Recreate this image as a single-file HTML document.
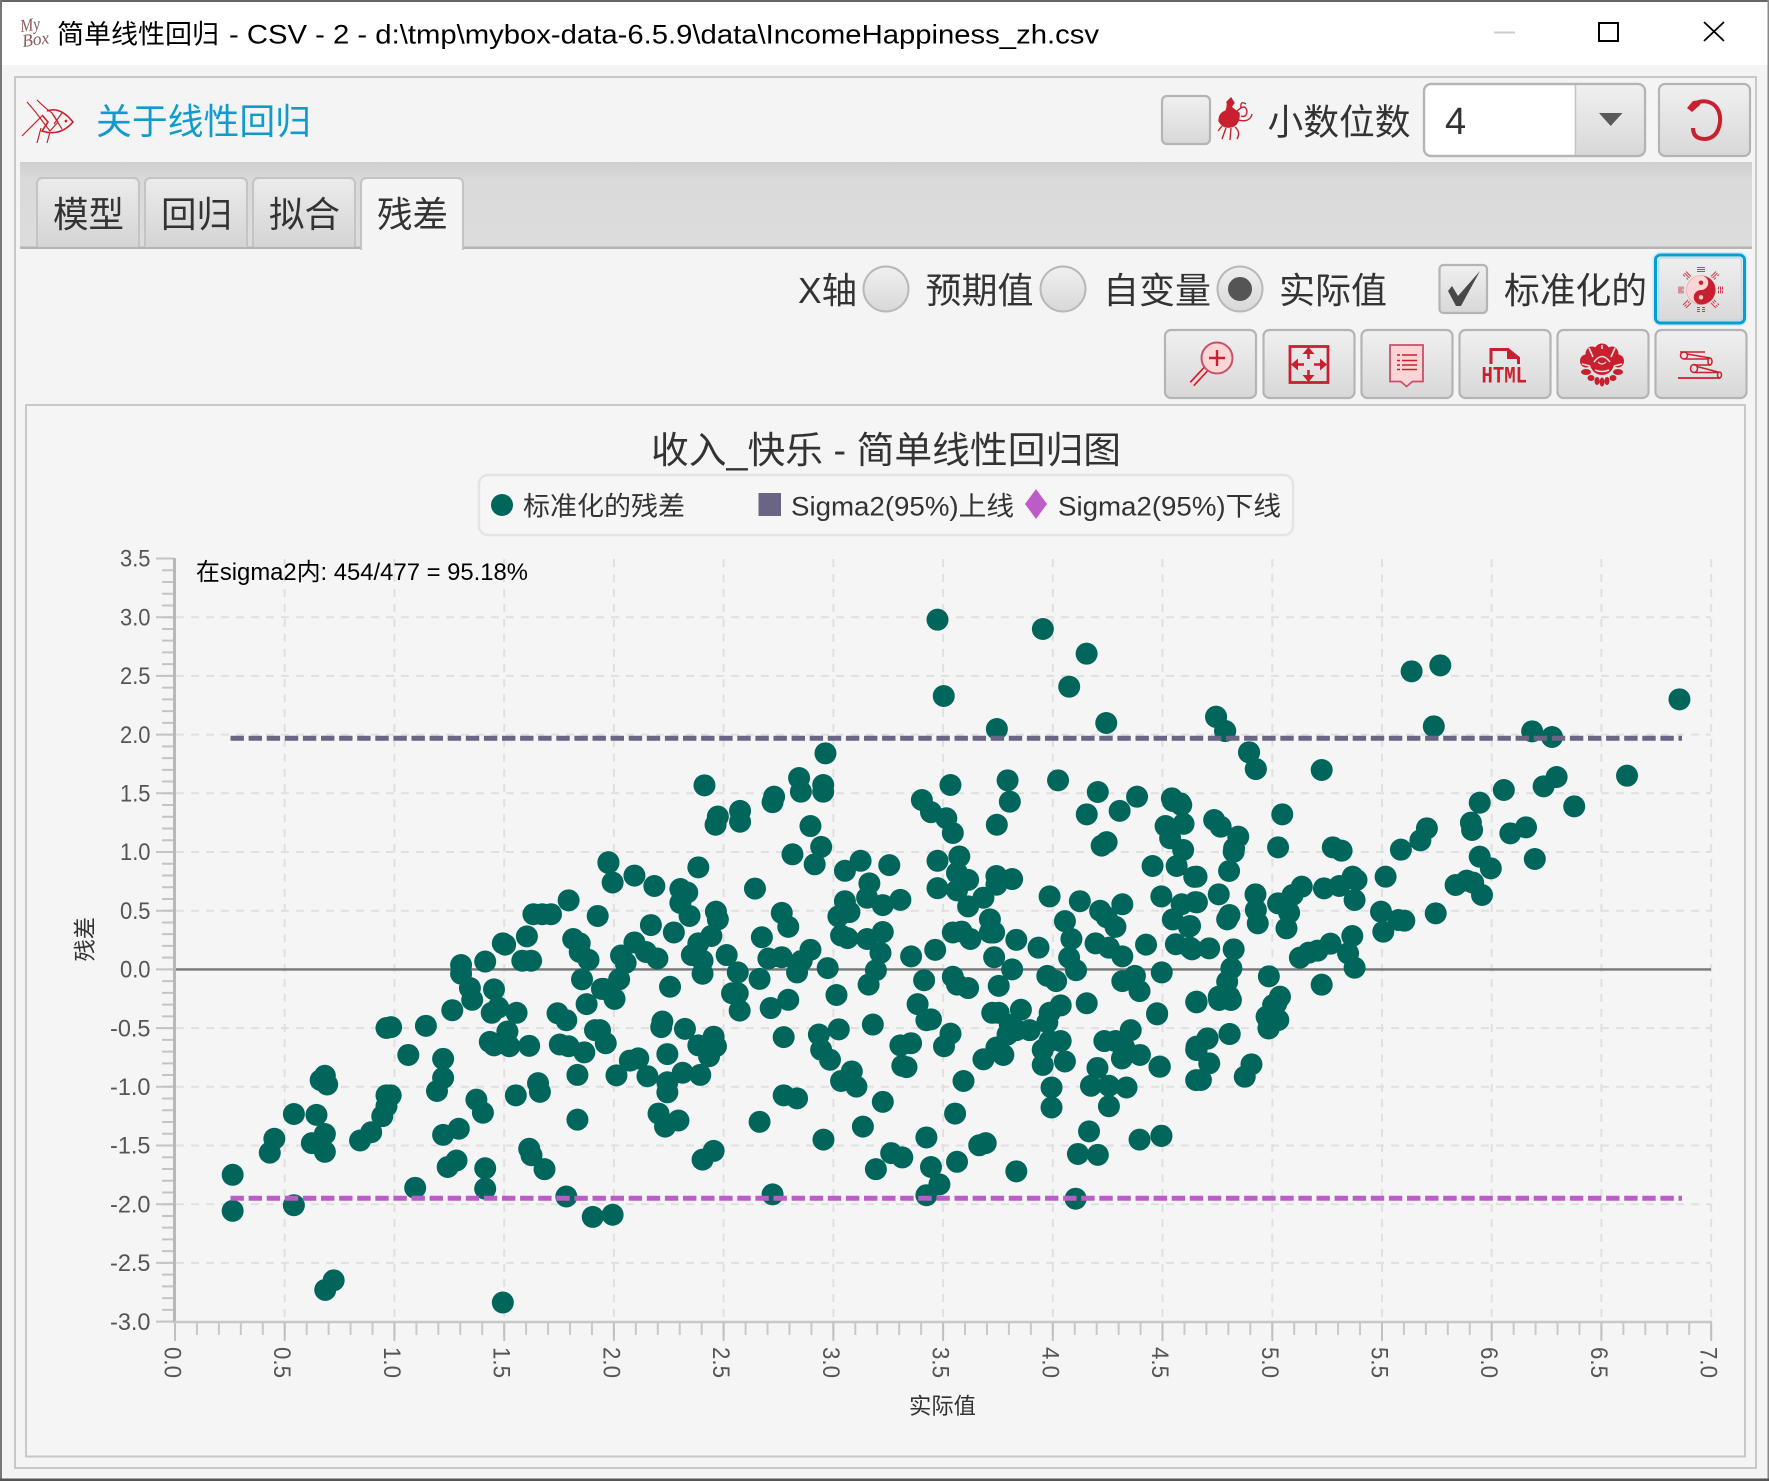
<!DOCTYPE html>
<html lang="zh"><head><meta charset="utf-8"><title>简单线性回归</title>
<style>
html,body{margin:0;padding:0;background:#f4f4f4;width:1769px;height:1481px;overflow:hidden}
svg{display:block}
text{font-family:"Liberation Sans","Noto Sans CJK SC",sans-serif;fill:#333}
.tk{fill:#555;font-size:24px}
.dots{fill:none;stroke:#00665b;stroke-width:22;stroke-linecap:round;vector-effect:non-scaling-stroke}
</style></head><body>
<svg xmlns="http://www.w3.org/2000/svg" width="1769" height="1481" viewBox="0 0 1769 1481">
<defs>
<linearGradient id="b" x1="0" y1="0" x2="0" y2="1"><stop offset="0" stop-color="#f0f0f0"/><stop offset="1" stop-color="#d8d8d8"/></linearGradient>
<linearGradient id="t" x1="0" y1="0" x2="0" y2="1"><stop offset="0" stop-color="#ececec"/><stop offset="1" stop-color="#d4d4d4"/></linearGradient>
<linearGradient id="h" x1="0" y1="0" x2="0" y2="1"><stop offset="0" stop-color="#cfcfcf"/><stop offset=".2" stop-color="#dadada"/><stop offset="1" stop-color="#dcdcdc"/></linearGradient>
</defs>
<!-- window -->
<rect width="1769" height="1481" fill="#f4f4f4"/>
<rect x="0" y="2" width="1769" height="63" fill="#fff"/>
<rect x="0" y="0" width="1769" height="2" fill="#666"/>
<rect x="0" y="0" width="2" height="1481" fill="#777"/>
<rect x="1767.5" y="0" width="1.5" height="1481" fill="#888"/>
<rect x="0" y="1478.5" width="1769" height="2.5" fill="#555"/>
<!-- title bar -->
<text x="21" y="32" style="font-family:'Liberation Serif',serif;font-style:italic;font-size:18px;fill:#8a5a5e" textLength="20" lengthAdjust="spacingAndGlyphs" transform="rotate(-8 21 32)">My</text>
<text x="23" y="47" style="font-family:'Liberation Serif',serif;font-style:italic;font-size:18px;fill:#8a5a5e" textLength="27" lengthAdjust="spacingAndGlyphs" transform="rotate(-8 23 47)">Box</text>
<text x="57" y="43.5" font-size="26.7" textLength="162" lengthAdjust="spacingAndGlyphs" style="fill:#000">简单线性回归</text>
<text x="229" y="43.5" font-size="26.7" textLength="870" lengthAdjust="spacingAndGlyphs" style="fill:#000">- CSV - 2 - d:\tmp\mybox-data-6.5.9\data\IncomeHappiness_zh.csv</text>
<rect x="1494" y="31.5" width="21" height="2" fill="#ccc"/>
<rect x="1599" y="23" width="19" height="18" fill="none" stroke="#000" stroke-width="2"/>
<path d="M1704 22L1724 41M1724 22L1704 41" stroke="#000" stroke-width="1.8" fill="none"/>
<!-- panels -->
<rect x="15" y="77" width="1741" height="1391" fill="none" stroke="#c8c8c8" stroke-width="2"/>
<!-- fish -->
<g fill="none" stroke="#c8202f" stroke-width="1.2">
<path d="M27 102Q36 112 43 122L50 131M37 100Q45 108 52 113L58 122L50 131M22 136Q32 126 42 116M37 143L41 128M47 143L50 132"/>
<path d="M47 111Q60 106 73 122Q60 137 42 131L48 122L42 115" stroke-width="1.6"/>
<path d="M52 113L62 129M62 113L54 124"/>
</g>
<circle cx="66" cy="121" r="1.4" fill="#c8202f"/>
<text x="96" y="134" font-size="35.7" textLength="215" lengthAdjust="spacingAndGlyphs" style="fill:#0f9ccc">关于线性回归</text>
<!-- top right -->
<rect x="1162" y="96" width="48" height="48" rx="5" fill="url(#b)" stroke="#b4b4b4" stroke-width="2.2"/>
<g fill="none" stroke="#c8202f" stroke-width="1.3">
<path d="M1219 121Q1219 113 1226 111Q1228 106 1227 102L1231 98L1234 103L1231 107Q1236 111 1239 113Q1240 122 1234 126Q1224 130 1219 121Z" fill="#c8202f"/>
<path d="M1236 112Q1246 102 1247 112Q1246 118 1241 116M1238 120Q1250 123 1252 114M1241 108Q1240 100 1246 104M1226 128L1222 139M1231 128L1230 140M1235 127Q1241 132 1237 139M1222 126L1218 131" stroke-width="1.4"/>
</g>
<text x="1267.5" y="134.5" font-size="35.7" textLength="143" lengthAdjust="spacingAndGlyphs">小数位数</text>
<rect x="1424" y="84" width="221" height="72" rx="7" fill="#fff" stroke="#b4b4b4" stroke-width="2.2"/>
<path d="M1576 85H1638Q1644 85 1644 91V149Q1644 155 1638 155H1576Z" fill="url(#b)"/>
<path d="M1575.5 85V155" stroke="#c4c4c4" stroke-width="1.5"/>
<rect x="1424" y="84" width="221" height="72" rx="7" fill="none" stroke="#b4b4b4" stroke-width="2.2"/>
<text x="1445" y="134" font-size="38">4</text>
<path d="M1599 113H1622.5L1610.7 126Z" fill="#5a5a5a"/>
<rect x="1659" y="84" width="91" height="72" rx="6" fill="url(#b)" stroke="#b4b4b4" stroke-width="2.2"/>
<path d="M1693 105Q1703 98 1713 104Q1721 110 1720 122Q1718 138 1705 139Q1693 139 1693 128" fill="none" stroke="#c8202f" stroke-width="4"/>
<path d="M1687 108L1693 101L1702 100L1700 105L1692 112Z" fill="#c8202f"/>
<!-- tabs -->
<rect x="20" y="162" width="1732" height="86" fill="url(#h)"/>
<rect x="20" y="246.5" width="1732" height="2.5" fill="#b4b4b4"/>
<g stroke="#c4c4c4" stroke-width="2" fill="url(#t)">
<path d="M37 247V184Q37 178 43 178H133Q139 178 139 184V247"/>
<path d="M145 247V184Q145 178 151 178H241Q247 178 247 184V247"/>
<path d="M253 247V184Q253 178 259 178H349Q355 178 355 184V247"/>
<path d="M361 250V184Q361 178 367 178H457Q463 178 463 184V250" fill="#f4f4f4"/>
</g>
<text x="53" y="227" font-size="35.7" textLength="71" lengthAdjust="spacingAndGlyphs">模型</text>
<text x="161" y="227" font-size="35.7" textLength="71" lengthAdjust="spacingAndGlyphs">回归</text>
<text x="269" y="227" font-size="35.7" textLength="71" lengthAdjust="spacingAndGlyphs">拟合</text>
<text x="377" y="227" font-size="35.7" textLength="71" lengthAdjust="spacingAndGlyphs">残差</text>
<!-- radio row -->
<text x="798" y="303" font-size="35.7" textLength="59" lengthAdjust="spacingAndGlyphs">X轴</text>
<circle cx="886" cy="289" r="22.5" fill="url(#b)" stroke="#b8b8b8" stroke-width="2"/>
<text x="925.5" y="303" font-size="35.7" textLength="108" lengthAdjust="spacingAndGlyphs">预期值</text>
<circle cx="1063" cy="289" r="22.5" fill="url(#b)" stroke="#b8b8b8" stroke-width="2"/>
<text x="1103" y="303" font-size="35.7" textLength="108" lengthAdjust="spacingAndGlyphs">自变量</text>
<circle cx="1240" cy="289" r="22.5" fill="url(#b)" stroke="#b8b8b8" stroke-width="2"/>
<circle cx="1240" cy="289" r="12" fill="#555"/>
<text x="1279" y="303" font-size="35.7" textLength="108" lengthAdjust="spacingAndGlyphs">实际值</text>
<rect x="1439.5" y="265" width="47.5" height="48" rx="4" fill="url(#b)" stroke="#b4b4b4" stroke-width="2.2"/>
<path d="M1448 291L1452 286L1458 296L1480 271L1461 306H1456Z" fill="#484848"/>
<text x="1504" y="303" font-size="35.7" textLength="143" lengthAdjust="spacingAndGlyphs">标准化的</text>
<!-- focused button -->
<rect x="1653.5" y="253" width="93" height="72" rx="7" fill="none" stroke="#cfe9f3" stroke-width="2"/>
<rect x="1655.5" y="255" width="89" height="68" rx="5" fill="url(#b)" stroke="#039ed3" stroke-width="3"/>
<rect x="1658.5" y="258" width="83" height="62" rx="3" fill="none" stroke="#bcdce8" stroke-width="1.5"/>
<g>
<circle cx="1701" cy="290" r="14.5" fill="#fcd5d5" stroke="#e8a0a8" stroke-width=".6"/>
<path d="M1701 275.5A14.5 14.5 0 0 1 1701 304.5A7.25 7.25 0 0 1 1701 290A7.25 7.25 0 0 0 1701 275.5Z" fill="#c8202f"/>
<circle cx="1701" cy="282.7" r="2.2" fill="#c8202f"/>
<circle cx="1701" cy="297.3" r="2.2" fill="#fcd5d5"/>
<g stroke="#c8202f" stroke-width="1" fill="none" opacity=".85">
<path d="M1697 267.5h8M1697 269.500h8M1697 271.500h8"/>
<path d="M1697 307.500h3M1702 307.500h3M1697 309.500h3M1702 309.500h3M1697 311.500h3M1702 311.500h3"/>
<path d="M1679 286.500v7M1681 286.500v7M1683 286.500v3M1683 290.500v3"/>
<path d="M1718.500 286.500v3M1718.500 290.500v3M1720.500 286.500v7M1722.500 286.500v3M1722.500 290.500v3"/>
<path d="M1686 271.500l5 5M1684.500 273l5 5M1683 274.500l2 2M1686.500 278l1.500 1.500"/>
<path d="M1711 276.500l5-5M1712.500 278l5-5M1714 279.500l2-2M1717.500 276l1.500-1.500"/>
<path d="M1686 308l5-5M1684.500 306.500l2-2M1688 303l1.500-1.500M1683 305l5-5"/>
<path d="M1711 303l5 5M1712.500 301.500l2 2M1716 305l1.500 1.500M1714 300l2 2M1717.500 303.500l1.500 1.500"/>
</g>
</g>
<!-- toolbar -->
<g fill="url(#b)" stroke="#b4b4b4" stroke-width="2.2">
<rect x="1165" y="330" width="91" height="68" rx="6"/>
<rect x="1263.500" y="330" width="91" height="68" rx="6"/>
<rect x="1361.500" y="330" width="91" height="68" rx="6"/>
<rect x="1459.500" y="330" width="91" height="68" rx="6"/>
<rect x="1557.500" y="330" width="91" height="68" rx="6"/>
<rect x="1655.500" y="330" width="91" height="68" rx="6"/>
</g>
<!-- magnifier -->
<path d="M1206 369L1192 384" stroke="#c8202f" stroke-width="6.500" fill="none"/>
<path d="M1206 369L1192 384" stroke="#fcd5d5" stroke-width="3.200" fill="none"/>
<circle cx="1217" cy="358" r="15.500" fill="#fcd5d5" stroke="#c8506a" stroke-width="2"/>
<path d="M1217 350V366M1209 358H1225" stroke="#c8202f" stroke-width="2.400"/>
<!-- fullscreen -->
<rect x="1290" y="346.500" width="38" height="36" fill="none" stroke="#c8202f" stroke-width="2.800"/>
<path d="M1308.500 349V359M1308.500 370V381M1293 364.500H1304M1314 364.500H1326" stroke="#c8202f" stroke-width="2.600" fill="none"/>
<path d="M1308.500 347L1302.500 354H1314.500ZM1308.500 382L1302.500 375H1314.500ZM1291 364.500L1298 358.500V370.500ZM1327 364.500L1320 358.500V370.500Z" fill="#c8202f"/>
<!-- note -->
<path d="M1390 345H1423V381.500H1412.500L1406.600 386.500L1400.700 381.500H1390Z" fill="#fcd5d5" stroke="#c8506a" stroke-width="1.800"/>
<path d="M1397 355h3M1402 355h15M1397 360.500h3M1402 360.500h15M1397 365h3M1402 365h15M1397 369.500h3M1402 369.500h15" stroke="#c8202f" stroke-width="1.500" fill="none"/>
<!-- html -->
<path d="M1491 364V349.500H1508L1518.500 358V364" fill="none" stroke="#c8202f" stroke-width="3"/>
<path d="M1507 348L1520 359H1507Z" fill="#c8202f"/>
<text x="1481.500" y="382.500" textLength="45.500" lengthAdjust="spacingAndGlyphs" style="font-family:'Liberation Mono',monospace;font-weight:700;font-size:23px;fill:#c8202f">HTML</text>
<!-- peony -->
<g fill="#c8202f">
<ellipse cx="1602" cy="352" rx="8" ry="8.500"/><ellipse cx="1592" cy="354" rx="6.500" ry="7.500"/><ellipse cx="1612" cy="354" rx="6.500" ry="7.500"/>
<ellipse cx="1586" cy="361" rx="6" ry="6.500"/><ellipse cx="1618" cy="361" rx="6" ry="6.500"/>
<circle cx="1602" cy="363" r="12"/>
<ellipse cx="1586" cy="372" rx="5" ry="3"/><ellipse cx="1618" cy="372" rx="5" ry="3"/>
<ellipse cx="1591" cy="378" rx="3.500" ry="3"/><ellipse cx="1613" cy="378" rx="3.500" ry="3"/>
<ellipse cx="1597" cy="381" rx="2.500" ry="4"/><ellipse cx="1607" cy="381" rx="2.500" ry="4"/><ellipse cx="1602" cy="382" rx="2.500" ry="4.500"/>
</g>
<g fill="none" stroke="#ecdcdc" stroke-width="1.600">
<path d="M1594 362Q1602 351 1610 362M1595 370Q1602 373 1609 370M1589 348L1593 357M1615 348L1611 357M1602 345V349M1582 364L1590 366M1622 364L1614 366"/>
<path d="M1598 362Q1602 366 1606 362" stroke-width="1.200"/>
</g>
<!-- scroll -->
<g fill="none" stroke="#c8202f" stroke-width="1.500">
<path d="M1680 352H1705"/>
<ellipse cx="1684" cy="355.500" rx="3.500" ry="3.500"/>
<path d="M1684 359H1709M1687 354L1710 358"/>
<ellipse cx="1710" cy="361.500" rx="2" ry="3.500"/>
<path d="M1710 365H1694"/>
<ellipse cx="1694" cy="368.500" rx="3.500" ry="4"/>
<path d="M1695 372.500H1718M1697 366.500L1718 372"/>
<ellipse cx="1719.500" cy="375" rx="2" ry="3"/>
<path d="M1678 378H1720" stroke-width="1.800"/>
</g>
<!-- chart frame -->
<rect x="26" y="405" width="1719" height="1051.500" fill="#f5f5f5" stroke="#c8c8c8" stroke-width="2"/>
<text x="651" y="463" font-size="37" textLength="470" lengthAdjust="spacingAndGlyphs">收入_快乐 - 简单线性回归图</text>
<rect x="479" y="475" width="814" height="60" rx="9" fill="#f6f6f6" stroke="#e4e4e4" stroke-width="2.500"/>
<circle cx="502" cy="505" r="11" fill="#00665b"/>
<text x="523" y="515.500" font-size="26.700" textLength="162" lengthAdjust="spacingAndGlyphs">标准化的残差</text>
<rect x="758.500" y="493" width="22.500" height="23" fill="#6b6585"/>
<text x="791" y="515.500" font-size="26.700" textLength="223" lengthAdjust="spacingAndGlyphs">Sigma2(95%)上线</text>
<path d="M1036 489L1047 504L1036 519L1025 504Z" fill="#bc5cc8"/>
<text x="1058" y="515.500" font-size="26.700" textLength="223" lengthAdjust="spacingAndGlyphs">Sigma2(95%)下线</text>
<!-- grid -->
<g fill="none" stroke="#e0e0e0" stroke-width="2" stroke-dasharray="8 7">
<path d="M176 617.200H1711M176 675.900H1711M176 734.600H1711M176 793.300H1711M176 852H1711M176 910.700H1711M176 1028.100H1711M176 1086.800H1711M176 1145.500H1711M176 1204.200H1711M176 1262.900H1711"/>
<path d="M284.700 559V1322M394.400 559V1322M504.200 559V1322M613.900 559V1322M723.600 559V1322M833.400 559V1322M943.100 559V1322M1052.800 559V1322M1162.500 559V1322M1272.300 559V1322M1382 559V1322M1491.700 559V1322M1601.400 559V1322M1711.200 559V1322"/>
</g>
<path d="M176 969.400H1711" stroke="#777" stroke-width="2.400"/>
<!-- axes -->
<path d="M168 558.500V1322" fill="none" stroke="#c4c4c4" stroke-width="12" stroke-dasharray="2 9.740" stroke-dashoffset="1"/>
<path d="M156 558.500H174M156 617.200H174M156 675.900H174M156 734.600H174M156 793.300H174M156 852H174M156 910.700H174M156 969.400H174M156 1028.100H174M156 1086.800H174M156 1145.500H174M156 1204.200H174M156 1262.900H174M156 1321.600H174" stroke="#c4c4c4" stroke-width="2" fill="none"/>
<path d="M174.500 558V1323" stroke="#b8b8b8" stroke-width="3"/>
<path d="M175 1329H1711.500" fill="none" stroke="#c8c8c8" stroke-width="12" stroke-dasharray="2 19.945" stroke-dashoffset="1"/>
<path d="M175 1322V1341M284.700 1322V1341M394.400 1322V1341M504.200 1322V1341M613.900 1322V1341M723.600 1322V1341M833.400 1322V1341M943.100 1322V1341M1052.800 1322V1341M1162.500 1322V1341M1272.300 1322V1341M1382 1322V1341M1491.700 1322V1341M1601.400 1322V1341M1711.200 1322V1341" stroke="#c0c0c0" stroke-width="2" fill="none"/>
<path d="M174 1322H1712" stroke="#c8c8c8" stroke-width="2.500"/>
<!-- y labels -->
<text class="tk" x="120" y="566.700" textLength="30.500" lengthAdjust="spacingAndGlyphs">3.5</text>
<text class="tk" x="120" y="625.400" textLength="30.500" lengthAdjust="spacingAndGlyphs">3.0</text>
<text class="tk" x="120" y="684.100" textLength="30.500" lengthAdjust="spacingAndGlyphs">2.5</text>
<text class="tk" x="120" y="742.800" textLength="30.500" lengthAdjust="spacingAndGlyphs">2.0</text>
<text class="tk" x="120" y="801.500" textLength="30.500" lengthAdjust="spacingAndGlyphs">1.5</text>
<text class="tk" x="120" y="860.200" textLength="30.500" lengthAdjust="spacingAndGlyphs">1.0</text>
<text class="tk" x="120" y="918.900" textLength="30.500" lengthAdjust="spacingAndGlyphs">0.5</text>
<text class="tk" x="120" y="977.600" textLength="30.500" lengthAdjust="spacingAndGlyphs">0.0</text>
<text class="tk" x="110" y="1036.300" textLength="40.500" lengthAdjust="spacingAndGlyphs">-0.5</text>
<text class="tk" x="110" y="1095" textLength="40.500" lengthAdjust="spacingAndGlyphs">-1.0</text>
<text class="tk" x="110" y="1153.700" textLength="40.500" lengthAdjust="spacingAndGlyphs">-1.5</text>
<text class="tk" x="110" y="1212.400" textLength="40.500" lengthAdjust="spacingAndGlyphs">-2.0</text>
<text class="tk" x="110" y="1271.100" textLength="40.500" lengthAdjust="spacingAndGlyphs">-2.5</text>
<text class="tk" x="110" y="1329.800" textLength="40.500" lengthAdjust="spacingAndGlyphs">-3.0</text>
<!-- x labels -->
<text class="tk" transform="translate(164.500 1347) rotate(90)" textLength="31" lengthAdjust="spacingAndGlyphs">0.0</text>
<text class="tk" transform="translate(274.200 1347) rotate(90)" textLength="31" lengthAdjust="spacingAndGlyphs">0.5</text>
<text class="tk" transform="translate(383.900 1347) rotate(90)" textLength="31" lengthAdjust="spacingAndGlyphs">1.0</text>
<text class="tk" transform="translate(493.700 1347) rotate(90)" textLength="31" lengthAdjust="spacingAndGlyphs">1.5</text>
<text class="tk" transform="translate(603.400 1347) rotate(90)" textLength="31" lengthAdjust="spacingAndGlyphs">2.0</text>
<text class="tk" transform="translate(713.100 1347) rotate(90)" textLength="31" lengthAdjust="spacingAndGlyphs">2.5</text>
<text class="tk" transform="translate(822.900 1347) rotate(90)" textLength="31" lengthAdjust="spacingAndGlyphs">3.0</text>
<text class="tk" transform="translate(932.600 1347) rotate(90)" textLength="31" lengthAdjust="spacingAndGlyphs">3.5</text>
<text class="tk" transform="translate(1042.300 1347) rotate(90)" textLength="31" lengthAdjust="spacingAndGlyphs">4.0</text>
<text class="tk" transform="translate(1152 1347) rotate(90)" textLength="31" lengthAdjust="spacingAndGlyphs">4.5</text>
<text class="tk" transform="translate(1261.800 1347) rotate(90)" textLength="31" lengthAdjust="spacingAndGlyphs">5.0</text>
<text class="tk" transform="translate(1371.500 1347) rotate(90)" textLength="31" lengthAdjust="spacingAndGlyphs">5.5</text>
<text class="tk" transform="translate(1481.200 1347) rotate(90)" textLength="31" lengthAdjust="spacingAndGlyphs">6.0</text>
<text class="tk" transform="translate(1590.900 1347) rotate(90)" textLength="31" lengthAdjust="spacingAndGlyphs">6.5</text>
<text class="tk" transform="translate(1700.700 1347) rotate(90)" textLength="31" lengthAdjust="spacingAndGlyphs">7.0</text>
<text x="909" y="1414" font-size="22.500" textLength="67" lengthAdjust="spacingAndGlyphs">实际值</text>
<text transform="translate(93 961.500) rotate(-90)" font-size="22.500" textLength="44.500" lengthAdjust="spacingAndGlyphs">残差</text>
<!-- points -->
<g transform="scale(.38265 .43431) translate(0 1842)">
<path class="dots" d="M608 863h.01M608 946h.01M768 933h.01M768 723h.01M827 725h.01M717 780h.01M705 812h.01M815 790h.01M849 769h.01M849 810h.01M838 645h.01M849 635h.01M855 655h.01M850 1128h.01M872 1106h.01M1085 893h.01M1268 895h.01M1268 848h.01M941 784h.01M970 765h.01M999 728h.01M1010 705h.01M1010 680h.01M1021 680h.01M1010 525h.01M1022 523h.01M1067 587h.01M1113 520h.01M1158 596h.01M1158 640h.01M1142 670h.01M1182 484h.01M1158 771h.01M1199 757h.01M1170 845h.01M1193 830h.01M1245 690h.01M1262 720h.01M1205 380h.01M1205 400h.01M1228 433h.01M1234 460h.01M1268 372h.01M1291 436h.01M1285 490h.01M1302 478h.01M1350 490h.01M1326 533h.01M1280 557h.01M1291 565h.01M1331 567h.01M1383 566h.01M1314 330h.01M1320 333h.01M1377 314h.01M1365 370h.01M1388 370h.01M1394 263h.01M1417 263h.01M1440 263h.01M1486 231h.01M1498 320h.01M1515 330h.01M1515 350h.01M1538 368h.01M1521 413h.01M1573 435h.01M1533 470h.01M1457 491h.01M1480 507h.01M1463 563h.01M1486 567h.01M1527 581h.01M1509 633h.01M1555 530h.01M1406 652h.01M1411 672h.01M1348 680h.01M1509 736h.01M1383 803h.01M1389 818h.01M1423 850h.01M1480 913h.01M1549 960h.01M1314 1157h.01M1562 267h.01M1590 145h.01"/>
</g>
<g transform="translate(600 800) scale(.38265 .43431)">
<path class="dots" d="M308 38h.01M302 57h.01M366 25h.01M366 50h.01M451 5h.01M550 60h.01M578 108h.01M561 148h.01M503 125h.01M22 143h.01M33 190h.01M90 174h.01M142 198h.01M257 155h.01M210 205h.01M228 213h.01M210 237h.01M234 267h.01M405 204h.01M303 257h.01M308 275h.01M133 288h.01M193 305h.01M90 328h.01M55 358h.01M67 375h.01M50 413h.01M10 435h.01M38 458h.01M120 350h.01M150 365h.01M291 313h.01M257 330h.01M240 357h.01M268 370h.01M268 400h.01M331 357h.01M360 397h.01M345 445h.01M365 485h.01M360 445h.01M183 430h.01M475 260h.01M492 292h.01M423 316h.01M440 365h.01M475 362h.01M550 345h.01M527 370h.01M515 397h.01M417 412h.01M595 387h.01M618 449h.01M492 460h.01M446 479h.01M163 510h.01M160 523h.01M222 527h.01M257 565h.01M297 545h.01M303 567h.01M285 590h.01M176 585h.01M15 560h.01M0 530h.01M480 546h.01M572 540h.01M624 528h.01M578 575h.01M601 598h.01M713 517h.01M658 625h.01M630 647h.01M670 660h.01M480 680h.01M515 687h.01M417 741h.01M739 695h.01M687 752h.01M584 782h.01M761 813h.01M721 850h.01M790 823h.01M43 634h.01M78 600h.01M100 595h.01M124 636h.01M176 650h.01M176 673h.01M216 628h.01M262 633h.01M153 722h.01M170 752h.01M205 738h.01M268 828h.01M297 808h.01M451 908h.01M33 955h.01M853 777h.01M928 722h.01M865 845h.01M887 885h.01M853 910h.01M933 833h.01M950 647h.01M1088 855h.01M991 795h.01M1008 790h.01M640 163h.01M681 140h.01M704 192h.01M698 225h.01M739 242h.01M756 150h.01M785 230h.01M640 233h.01M652 258h.01M623 268h.01M630 312h.01M647 318h.01M698 320h.01M739 304h.01M733 352h.01M721 392h.01M702 425h.01M813 360h.01M876 345h.01M847 415h.01M922 407h.01M933 425h.01M962 433h.01M830 470h.01M853 507h.01M865 505h.01M916 538h.01M899 567h.01M785 565h.01M813 560h.01M790 612h.01M801 615h.01M882 140h.01M939 130h.01M882 203h.01M933 168h.01M962 184h.01M933 208h.01M962 245h.01M1002 225h.01M1036 175h.01M1036 195h.01M1077 182h.01M1037 57h.01M922 76h.01M905 42h.01M865 28h.01M1019 275h.01M1019 305h.01M1030 305h.01M922 305h.01M945 303h.01M968 320h.01M1088 322h.01M1146 340h.01M1030 362h.01M1077 390h.01M1042 428h.01M1025 490h.01M1042 490h.01M1100 483h.01M1071 518h.01M1088 530h.01M1123 530h.01M1065 540h.01M1036 570h.01M1054 587h.01M1002 597h.01M1169 512h.01M1175 490h.01M1204 473h.01M1272 468h.01M1175 222h.01M1254 233h.01M1215 279h.01M1232 320h.01M1226 363h.01M1244 392h.01M1295 330h.01M1330 340h.01M1365 360h.01M1307 255h.01M1324 270h.01M1347 292h.01M1365 240h.01M1427 333h.01M1468 397h.01M1467 222h.01M1444 152h.01M1272 33h.01M1358 25h.01M1311 105h.01M1324 97h.01M1478 60h.01M1490 88h.01M1525 55h.01M1524 115h.01M1507 152h.01M1553 177h.01M1497 275h.01M1520 240h.01M1556 235h.01M1542 290h.01M1505 332h.01M1542 340h.01M1169 405h.01M1192 417h.01M1365 417h.01M1398 405h.01M1410 440h.01M1456 491h.01M1558 465h.01M1387 530h.01M1318 555h.01M1347 555h.01M1370 570h.01M1364 595h.01M1411 587h.01M1175 555h.01M1204 555h.01M1157 575h.01M1157 610h.01M1215 602h.01M1300 617h.01M1283 658h.01M1330 658h.01M1376 662h.01M1330 705h.01M1462 614h.01M1180 662h.01M1180 708h.01M1278 763h.01M1249 815h.01M1301 817h.01M1410 782h.01M1467 773h.01M1243 918h.01M1558 575h.01M1558 645h.01"/>
</g>
<g transform="translate(1169 600) scale(.38265 .33333)">
<path class="dots" d="M123 350h.01M147 393h.01M209 457h.01M227 507h.01M399 510h.01M634 214h.01M709 196h.01M692 379h.01M949 394h.01M1001 411h.01M1334 298h.01M1197 527h.01M875 570h.01M812 608h.01M1013 531h.01M979 559h.01M1059 619h.01M789 668h.01M792 690h.01M933 682h.01M892 700h.01M296 643h.01M118 660h.01M135 680h.01M181 710h.01M170 745h.01M169 755h.01M285 742h.01M428 742h.01M451 752h.01M606 749h.01M657 721h.01M674 685h.01M812 770h.01M841 805h.01M956 777h.01M157 813h.01M72 830h.01M566 830h.01M10 603h.01M32 615h.01M130 883h.01M73 907h.01M226 883h.01M227 930h.01M232 970h.01M158 945h.01M152 958h.01M749 855h.01M778 842h.01M795 848h.01M818 885h.01M285 910h.01M314 938h.01M323 885h.01M347 860h.01M405 865h.01M445 858h.01M480 830h.01M490 840h.01M485 900h.01M554 935h.01M560 995h.01M600 960h.01M615 962h.01M697 940h.01M52 980h.01M60 1048h.01M105 1045h.01M169 1048h.01M163 1105h.01M152 1145h.01M130 1190h.01M158 1190h.01M72 1207h.01M261 1129h.01M399 1154h.01M342 1073h.01M365 1058h.01M388 1052h.01M422 1031h.01M479 1008h.01M468 1060h.01M485 1103h.01M290 1190h.01M272 1215h.01M255 1250h.01M285 1260h.01M261 1285h.01M158 1302h.01M100 1316h.01M72 1340h.01M307 985h.01"/>
</g>
<g transform="translate(1150 1000) scale(.39477 .33333)">
<path class="dots" d="M18 43h.01M118 5h.01M175 0h.01M205 0h.01M300 85h.01M310 50h.01M325 60h.01M320 10h.01M146 115h.01M202 102h.01M118 150h.01M150 190h.01M129 240h.01M257 193h.01M240 230h.01M25 200h.01M29 408h.01"/>
</g>
<g transform="translate(600 400) scale(.44643 .33333)">
<path class="dots" d="M756 659h.01M992 687h.01M1090 761h.01M1051 860h.01M770 888h.01M889 987h.01M1134 969h.01M1380 951h.01M1400 993h.01M1454 1057h.01M1469 1107h.01M505 1060h.01M234 1156h.01M446 1134h.01M450 1175h.01M500 1155h.01M500 1175h.01M390 1190h.01M721 1200h.01M785 1155h.01M913 1141h.01M1026 1141h.01M918 1205h.01M1115 1176h.01M1203 1190h.01M1281 1195h.01M1300 1210h.01"/>
</g>
<!-- sigma lines -->
<path d="M230.500 738.300H1682" stroke="#6b6585" stroke-width="5" stroke-dasharray="13.400 4.700" fill="none"/>
<path d="M230.500 1198.300H1682" stroke="#bc5cc8" stroke-width="5" stroke-dasharray="13.400 4.700" fill="none"/>
<text x="196" y="580" font-size="24" textLength="332" lengthAdjust="spacingAndGlyphs" style="fill:#000">在sigma2内: 454/477 = 95.18%</text>
</svg>
</body></html>
